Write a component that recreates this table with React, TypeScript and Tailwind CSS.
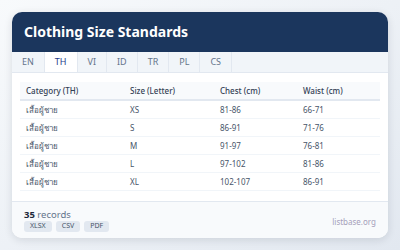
import React from "react";

const tabs = ["EN", "TH", "VI", "ID", "TR", "PL", "CS"];

const rows = [
  { cat: "เสื้อผู้ชาย", size: "XS", chest: "81-86", waist: "66-71" },
  { cat: "เสื้อผู้ชาย", size: "S", chest: "86-91", waist: "71-76" },
  { cat: "เสื้อผู้ชาย", size: "M", chest: "91-97", waist: "76-81" },
  { cat: "เสื้อผู้ชาย", size: "L", chest: "97-102", waist: "81-86" },
  { cat: "เสื้อผู้ชาย", size: "XL", chest: "102-107", waist: "86-91" },
];

const App = () => {
  return (
    <div
      className="w-[400px] h-[250px] bg-gradient-to-br from-[#f8fafc] to-[#e2e8f0] p-3 overflow-hidden"
      style={{ fontFamily: '"Noto Sans", "Open Sans", "DejaVu Sans", sans-serif' }}
    >
      <div className="w-[376px] h-[226px] bg-white rounded-[10px] shadow-[0_2px_8px_rgba(15,23,42,0.12)] overflow-hidden flex flex-col">
        {/* Header */}
        <div className="h-10 bg-[#1b365d] flex items-center px-3 shrink-0">
          <h1 className="text-white text-[14px] font-bold leading-none">Clothing Size Standards</h1>
        </div>
        {/* Tabs */}
        <div className="h-[21px] bg-[#f1f5f9] flex border-b border-[#e2e8f0] shrink-0">
          {tabs.map((t) => (
            <div
              key={t}
              className={
                t === "TH"
                  ? "px-[10px] flex items-center text-[9px] text-[#1e3a8a] bg-white border-r border-[#e2e8f0]"
                  : "px-[10px] flex items-center text-[9px] text-[#64748b] border-r border-[#e2e8f0]"
              }
            >
              {t}
            </div>
          ))}
        </div>
        {/* Table */}
        <div className="px-2 pt-[9px] flex-1">
          <div className="grid grid-cols-[104px_90px_83px_1fr] bg-[#f8fafc] h-[19px] items-center border-b-2 border-[#e2e8f0] text-[8px] text-[#334155] font-medium">
            <div className="px-[6px]">Category (TH)</div>
            <div className="px-[6px]">Size (Letter)</div>
            <div className="px-[6px]">Chest (cm)</div>
            <div className="px-[6px]">Waist (cm)</div>
          </div>
          {rows.map((r, i) => (
            <div
              key={i}
              className="grid grid-cols-[104px_90px_83px_1fr] h-[18px] items-center border-b border-[#f1f5f9] text-[8px] text-[#475569]"
            >
              <div className="px-[6px]">{r.cat}</div>
              <div className="px-[6px]">{r.size}</div>
              <div className="px-[6px]">{r.chest}</div>
              <div className="px-[6px]">{r.waist}</div>
            </div>
          ))}
        </div>
        {/* Footer */}
        <div className="h-[37px] bg-[#f8fafc] border-t border-[#e2e8f0] px-3 flex items-center justify-between shrink-0">
          <div className="flex flex-col gap-[1px]">
            <div className="text-[9.5px] leading-[11px] text-[#64748b]">
              <span className="font-bold text-[#1e293b]">35</span> records
            </div>
            <div className="flex gap-1">
              <span className="bg-[#e2e8f0] text-[#475569] text-[7px] rounded-[3px] px-[6px] h-[11px] flex items-center">XLSX</span>
              <span className="bg-[#e2e8f0] text-[#475569] text-[7px] rounded-[3px] px-[6px] h-[11px] flex items-center">CSV</span>
              <span className="bg-[#e2e8f0] text-[#475569] text-[7px] rounded-[3px] px-[6px] h-[11px] flex items-center">PDF</span>
            </div>
          </div>
          <div className="text-[8px] text-[#a59fba] mt-[4px]">listbase.org</div>
        </div>
      </div>
    </div>
  );
};

export default App;
